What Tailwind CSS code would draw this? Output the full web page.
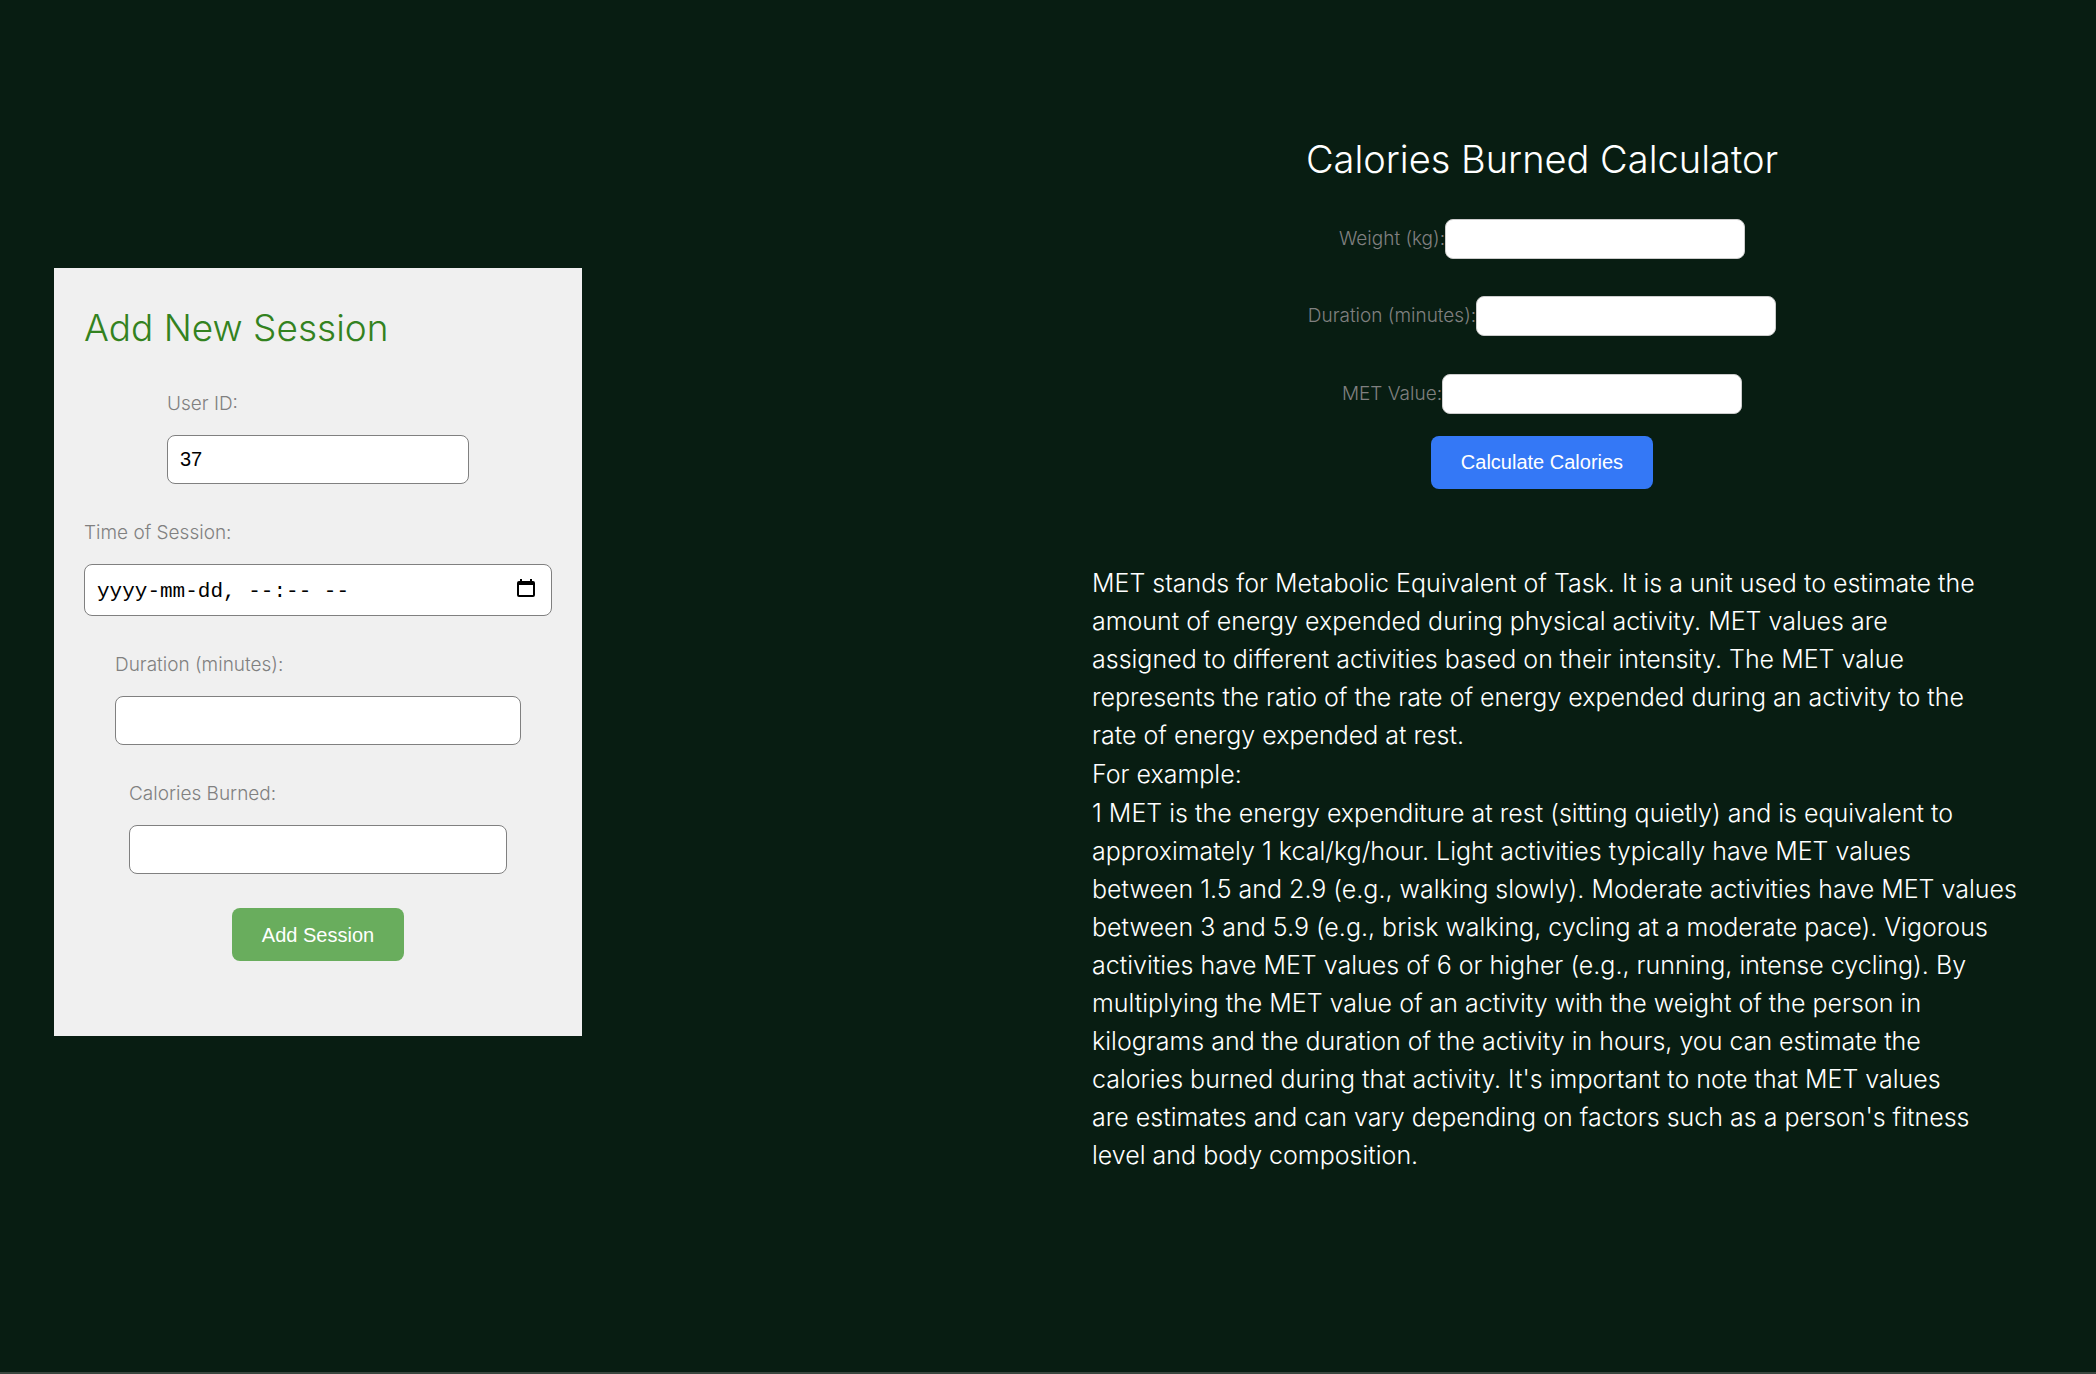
<!DOCTYPE html>
<html lang="en">
<head>
<meta charset="utf-8">
<title>Sessions</title>
<script src="https://cdn.jsdelivr.net/npm/@tailwindcss/browser@4"></script>
</head>
<body class="bg-[#081d12] font-['Inter',sans-serif] font-light">
<main class="flex min-h-screen items-center justify-between border-b-2 border-[#3a463f] pt-[54px] pr-[104px] pb-[122px] pl-[54px]">
  <form class="flex w-[528px] shrink-0 flex-col items-center bg-[#f0f0f0] px-[30px] pt-9 pb-[75px]">
    <h2 class="w-full text-[37px] leading-[48px] text-[#338220]">Add New Session</h2>
    <div class="mt-10 flex w-[302px] flex-col gap-[19px]">
      <label for="user" class="text-[19px] leading-6 text-[#808080]">User ID:</label>
      <input id="user" type="text" value="37" class="h-[49px] rounded-lg border border-[#808080] bg-white px-3 font-['Liberation_Sans',sans-serif] text-xl font-normal text-black">
    </div>
    <div class="mt-[37px] flex w-full flex-col gap-[19px]">
      <label for="time" class="text-[19px] leading-6 text-[#808080]">Time of Session:</label>
      <div class="flex h-[52px] items-center rounded-lg border border-[#808080] bg-white px-3">
        <input id="time" type="text" placeholder="yyyy-mm-dd, --:-- --" class="min-w-0 flex-1 pt-1 font-['Liberation_Mono',monospace] text-[21px] font-normal text-black placeholder:text-black">
        <button type="button" aria-label="Open calendar" class="mr-1 mb-1">
          <svg width="18" height="20" viewBox="0 0 18 20" class="block"><path d="M3 1h2v2h8V1h2v2h1a2 2 0 0 1 2 2v12a2 2 0 0 1-2 2H2a2 2 0 0 1-2-2V5a2 2 0 0 1 2-2h1zM2 7v10h14V7z" fill="#000" fill-rule="evenodd"/></svg>
        </button>
      </div>
    </div>
    <div class="mt-[37px] flex w-[406px] flex-col gap-[19px]">
      <label for="duration" class="text-[19px] leading-6 text-[#808080]">Duration (minutes):</label>
      <input id="duration" type="text" class="h-[49px] rounded-lg border border-[#808080] bg-white px-3 text-xl">
    </div>
    <div class="mt-[37px] flex w-[378px] flex-col gap-[19px]">
      <label for="calories" class="text-[19px] leading-6 text-[#808080]">Calories Burned:</label>
      <input id="calories" type="text" class="h-[49px] rounded-lg border border-[#808080] bg-white px-3 text-xl">
    </div>
    <button type="button" class="mt-[34px] h-[53px] w-[172px] rounded-lg bg-[#69ad5d] font-['Liberation_Sans',sans-serif] text-xl font-normal text-white">Add Session</button>
  </form>

  <section class="flex w-[900px] flex-col items-center pt-1">
    <form class="flex flex-col items-center">
      <h2 class="text-[38px] leading-[48px] text-white">Calories Burned Calculator</h2>
      <div class="mt-9 flex items-center">
        <label for="weight" class="text-[19px] leading-6 text-[#808080]">Weight (kg):</label>
        <input id="weight" type="text" class="h-10 w-[300px] rounded-lg border border-[#ccc] bg-white px-3">
      </div>
      <div class="mt-[37px] flex items-center">
        <label for="minutes" class="text-[19px] leading-6 text-[#808080]">Duration (minutes):</label>
        <input id="minutes" type="text" class="h-10 w-[300px] rounded-lg border border-[#ccc] bg-white px-3">
      </div>
      <div class="mt-[38px] flex items-center">
        <label for="met" class="text-[19px] leading-6 text-[#808080]">MET Value:</label>
        <input id="met" type="text" class="h-10 w-[300px] rounded-lg border border-[#ccc] bg-white px-3">
      </div>
      <button type="button" class="mt-[22px] h-[53px] w-[222px] rounded-lg bg-[#3478f6] font-['Liberation_Sans',sans-serif] text-xl font-normal text-white">Calculate Calories</button>
    </form>
    <div class="mt-[75px] flex w-full flex-col gap-px text-[25px] leading-[38px] whitespace-nowrap text-white">
      <p>MET stands for Metabolic Equivalent of Task. It is a unit used to estimate the<br>
        amount of energy expended during physical activity. MET values are<br>
        assigned to different activities based on their intensity. The MET value<br>
        represents the ratio of the rate of energy expended during an activity to the<br>
        rate of energy expended at rest.</p>
      <p>For example:</p>
      <p>1 MET is the energy expenditure at rest (sitting quietly) and is equivalent to<br>
        approximately 1 kcal/kg/hour. Light activities typically have MET values<br>
        between 1.5 and 2.9 (e.g., walking slowly). Moderate activities have MET values<br>
        between 3 and 5.9 (e.g., brisk walking, cycling at a moderate pace). Vigorous<br>
        activities have MET values of 6 or higher (e.g., running, intense cycling). By<br>
        multiplying the MET value of an activity with the weight of the person in<br>
        kilograms and the duration of the activity in hours, you can estimate the<br>
        calories burned during that activity. It's important to note that MET values<br>
        are estimates and can vary depending on factors such as a person's fitness<br>
        level and body composition.</p>
    </div>
  </section>
</main>
</body>
</html>
